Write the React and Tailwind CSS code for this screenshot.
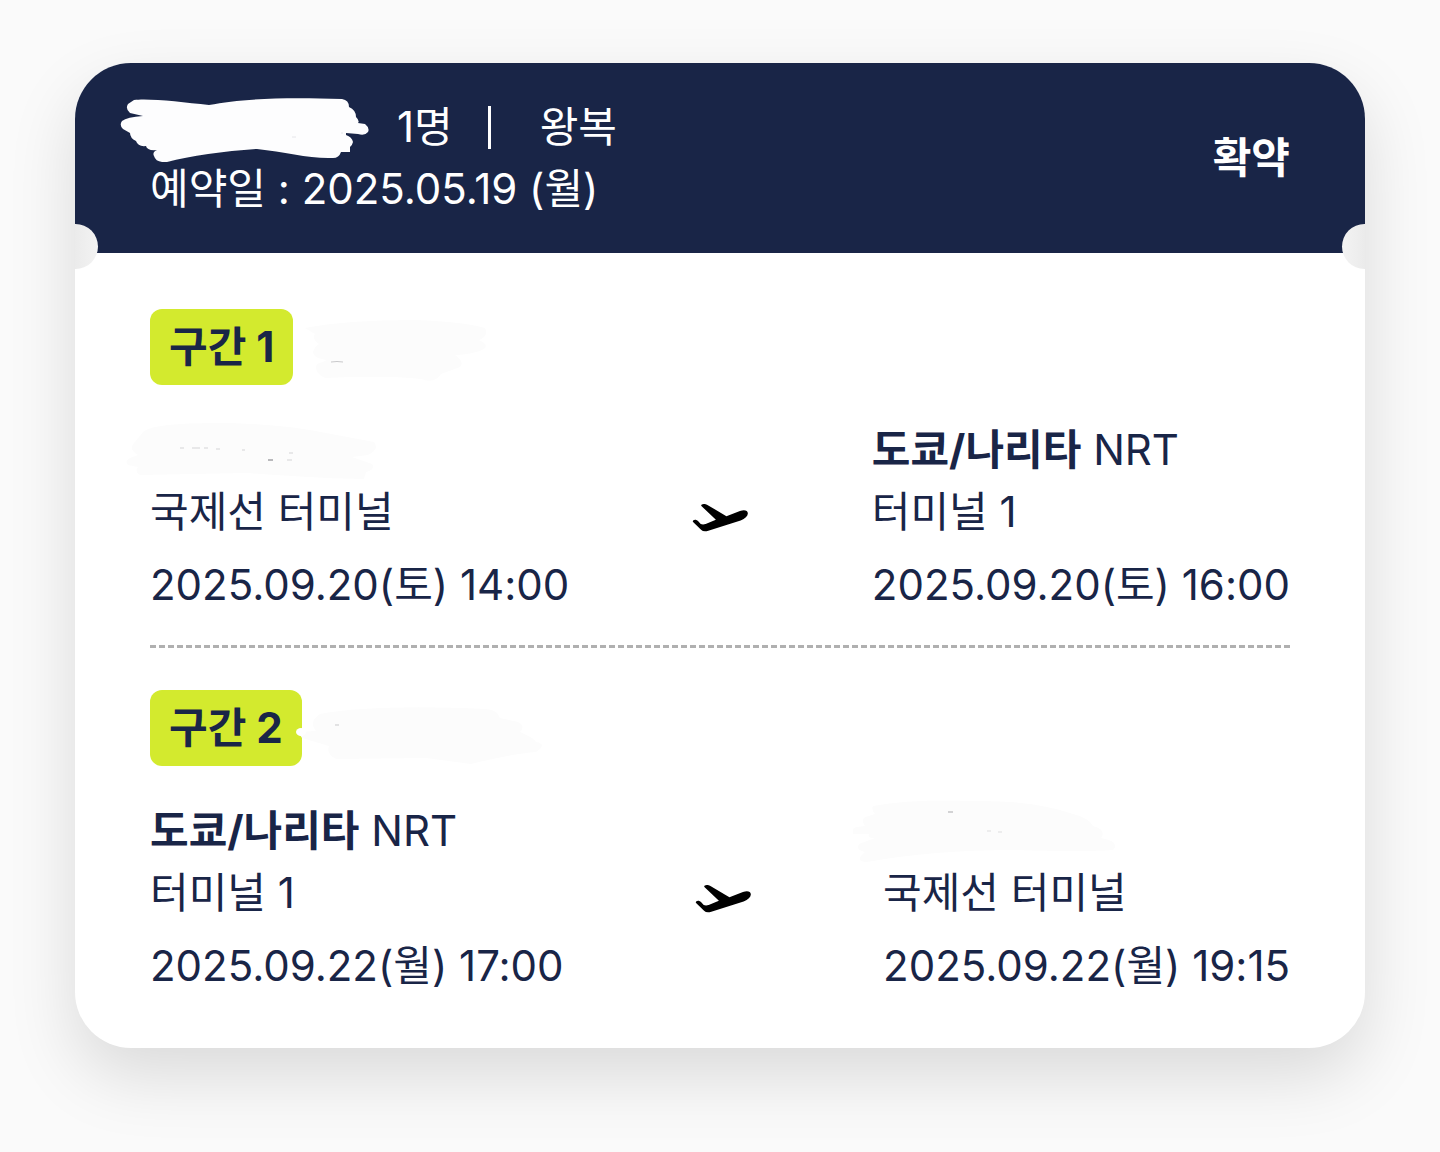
// App.jsx — Flight booking ticket card

const FONT = 'font-[Inter,"Noto_Sans_CJK_KR",sans-serif]';

function PlaneIcon() {
  return (
    <svg viewBox="36 36 170 88" className="w-[57px] h-[29px] shrink-0" fill="#000" aria-hidden="true">
      <path d="M37 93Q36 86 46 87Q51 88 55 93L60 99Q66 103 76 100L107 87L63 45Q60 40 70 39Q75 38 80 41L139 76L180 60Q203 54 204 68Q203 80 182 89L84 120Q70 125 62 117Z" />
    </svg>
  );
}

/* Hand-drawn strokes that hide private details */
function NameScribble() {
  return (
    <svg viewBox="0 0 250 64" className="w-[250px] h-16 shrink-0" aria-hidden="true">
      <path
        fill="#fdfdfe"
        d="M14 2C28 0 62 4 89 7C120 1 160 -1 222 1Q229 2 229 9Q236 12 236 19Q240 23 238 25L245 26Q250 30 248 34Q245 38 238 36L226 35V37Q232 39 233 44Q232 48 230 49V54H221Q219 60 213 60C190 61 165 54 137 51C105 53 70 58 47 64Q36 65 34 58Q32 54 37 52Q27 53 26 48Q18 49 16 43Q10 40 10 35L3 31Q-1 27 2 23Q7 19 23 18L10 15Q5 11 8 6Z"
      />
      <path d="M172 39h4M221 35h2" stroke="#e6e6ea" strokeWidth="1" />
    </svg>
  );
}

function OutboundFlightScribble() {
  return (
    <svg viewBox="0 0 182 64" className="w-[182px] h-16 shrink-0" aria-hidden="true">
      <path
        fill="#fcfcfc"
        d="M0 10Q40 2 110 2Q160 4 180 10Q184 18 174 22Q183 26 180 30Q172 36 150 37Q160 44 155 49L136 56Q130 66 116 61Q80 57 20 60Q8 54 12 46Q18 44 22 42Q8 40 8 34Q10 28 14 26Q6 20 10 16Z"
      />
      <path d="M26 44Q32 43 38 44" stroke="#c9c9cb" strokeWidth="1" fill="none" />
    </svg>
  );
}

function ReturnFlightScribble() {
  return (
    <svg viewBox="0 0 246 60" className="w-[246px] h-[60px] shrink-0" aria-hidden="true">
      <path
        fill="#fcfcfc"
        d="M2 28L20 27Q12 18 24 10Q80 0 190 5Q202 6 204 14L222 18Q230 22 224 28Q238 34 240 38Q252 40 240 48Q215 50 175 60L130 54L40 55Q30 50 33 42L6 34Z"
      />
      <ellipse cx="5" cy="28" rx="5" ry="4" fill="#fff" />
      <path d="M39 21h4" stroke="#c9c9cb" strokeWidth="1" />
    </svg>
  );
}

function DepartureScribble() {
  return (
    <svg viewBox="0 0 252 58" className="w-[252px] h-[58px] shrink-0" aria-hidden="true">
      <path
        fill="#fcfcfc"
        d="M18 10Q30 2 90 2Q150 2 200 12L248 21Q254 28 242 34L226 36L246 43Q250 48 240 51L238 58Q200 58 120 52L14 54Q8 50 12 46L2 44Q-2 40 4 37L12 34Q2 28 8 22Z"
      />
      <path d="M54 27h4M66 27h8M78 27h4M90 28h4M116 29h3M163 32h4M161 39h5" stroke="#d4d4d6" strokeWidth="1" />
      <path d="M142 39h5" stroke="#77777c" strokeWidth="1" />
    </svg>
  );
}

function ArrivalScribble() {
  return (
    <svg viewBox="0 0 266 62" className="w-[266px] h-[62px] shrink-0" aria-hidden="true">
      <path
        fill="#fcfcfc"
        d="M20 6Q60 -1 120 1Q180 0 220 14Q236 18 240 26Q254 30 248 38Q268 42 260 50Q230 52 160 50Q80 50 14 62Q4 62 8 56L12 52Q2 50 6 44L22 38Q14 38 16 34L0 34Q-2 28 4 27L12 26Q6 18 16 16L22 14Q18 10 20 6Z"
      />
      <path d="M95 12h5" stroke="#aaaaad" strokeWidth="1" />
      <path d="M134 31h4M145 32h4" stroke="#dededf" strokeWidth="1" />
    </svg>
  );
}

function SegmentBadge({ number }) {
  return (
    <h2 className="flex h-[76px] items-center rounded-xl bg-[#d3ea2e] px-[19px] font-bold">
      구간 {number}
    </h2>
  );
}

function Narita() {
  return (
    <>
      <span className="font-bold">도쿄/나리타</span> NRT
    </>
  );
}

function Stop({ city, terminal, date, time }) {
  return (
    <div>
      <div className="flex h-[62px] items-center">
        <p>{city}</p>
      </div>
      <p>{terminal}</p>
      <p className="mt-[11px]">
        {date} {time}
      </p>
    </div>
  );
}

export default function App() {
  return (
    <main className={`min-h-screen bg-[#fafafa] px-[75px] pt-[63px] pb-[104px] text-[42px] leading-[62px] text-[#192547] ${FONT}`}>
      <article className="relative rounded-[56px] bg-white shadow-[0_28px_68px_rgba(0,0,0,0.13)]">
        {/* Header */}
        <header className="flex items-center justify-between rounded-t-[56px] bg-[#192547] px-[75px] py-[33px] text-white">
          <div>
            <div className="flex h-[62px] items-center">
              <div className="-ml-[30px] mr-[27px] pt-[6px]">
                <NameScribble />
              </div>
              <span>1명</span>
              <span className="ml-[35px] mr-[49px] h-[43px] w-[3px] bg-white" />
              <span>왕복</span>
            </div>
            <p>예약일 : 2025.05.19 (월)</p>
          </div>
          <strong className="font-bold">확약</strong>
        </header>

        {/* Ticket notches */}
        <div className="absolute left-0 top-[161px] h-[45px] w-[23px] rounded-r-full bg-linear-to-r from-[#ebebeb] to-[#f3f3f3]" />
        <div className="absolute right-0 top-[161px] h-[45px] w-[23px] rounded-l-full bg-linear-to-l from-[#ebebeb] to-[#f3f3f3]" />

        <div className="px-[75px] pt-[56px] pb-[51px]">
          {/* Outbound */}
          <section>
            <div className="flex items-center">
              <SegmentBadge number={1} />
              <div className="ml-3 pt-[6px]">
                <OutboundFlightScribble />
              </div>
            </div>
            <div className="mt-[34px] flex items-center justify-between">
              <Stop
                city={<span className="-ml-6 block w-0"><DepartureScribble /></span>}
                terminal="국제선 터미널"
                date="2025.09.20(토)"
                time="14:00"
              />
              <PlaneIcon />
              <Stop
                city={<Narita />}
                terminal="터미널 1"
                date="2025.09.20(토)"
                time="16:00"
              />
            </div>
          </section>

          <hr className="mt-[29px] mb-[42px] border-0 border-t-3 border-dashed border-[#b0b0b0]" />

          {/* Return */}
          <section>
            <div className="flex items-center">
              <SegmentBadge number={2} />
              <div className="-ml-[6px] pt-[12px]">
                <ReturnFlightScribble />
              </div>
            </div>
            <div className="mt-[34px] flex items-center justify-between">
              <Stop
                city={<Narita />}
                terminal="터미널 1"
                date="2025.09.22(월)"
                time="17:00"
              />
              <PlaneIcon />
              <Stop
                city={<span className="-ml-[30px] block w-0"><ArrivalScribble /></span>}
                terminal="국제선 터미널"
                date="2025.09.22(월)"
                time="19:15"
              />
            </div>
          </section>
        </div>
      </article>
    </main>
  );
}
